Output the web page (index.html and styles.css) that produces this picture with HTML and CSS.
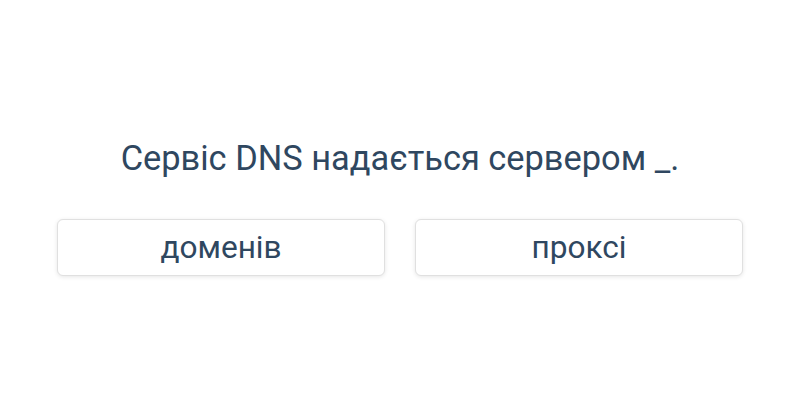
FILE: index.html
```html
<!DOCTYPE html>
<html lang="uk">
  <head>
    <meta charset="UTF-8" />
    <title>Quiz</title>
    <link rel="stylesheet" href="styles.css">
  </head>
  <body>
    <main class="quiz">
      <h1 class="question">Сервіс DNS надається сервером _.</h1>
      <div class="answers">
        <button class="answer">доменів</button>
        <button class="answer">проксі</button>
      </div>
    </main>
  </body>
</html>
```

FILE: styles.css
```css
* {
  padding: 0;
  margin: 0;
  box-sizing: border-box;
}

body {
  height: 100vh;
  width: 100vw;
  background: #fff;
  font-family: Roboto, "Noto Sans", sans-serif;
  color: #2f4760;
}

.quiz {
  padding: 136px 57px 0 57px;
}

.question {
  font-size: 34.4px;
  font-weight: 400;
  text-align: center;
  line-height: 44px;
}

.answers {
  display: grid;
  grid-template-columns: 1fr 1fr;
  gap: 30px;
  margin-top: 39px;
}

.answer {
  height: 57px;
  background: #fff;
  border: 1px solid #e0e0e0;
  border-radius: 6px;
  box-shadow: 0 1px 4px rgba(0, 0, 0, 0.1);
  font-family: Roboto, "Noto Sans", sans-serif;
  font-size: 31.6px;
  color: #2f4760;
  cursor: pointer;
}
```
